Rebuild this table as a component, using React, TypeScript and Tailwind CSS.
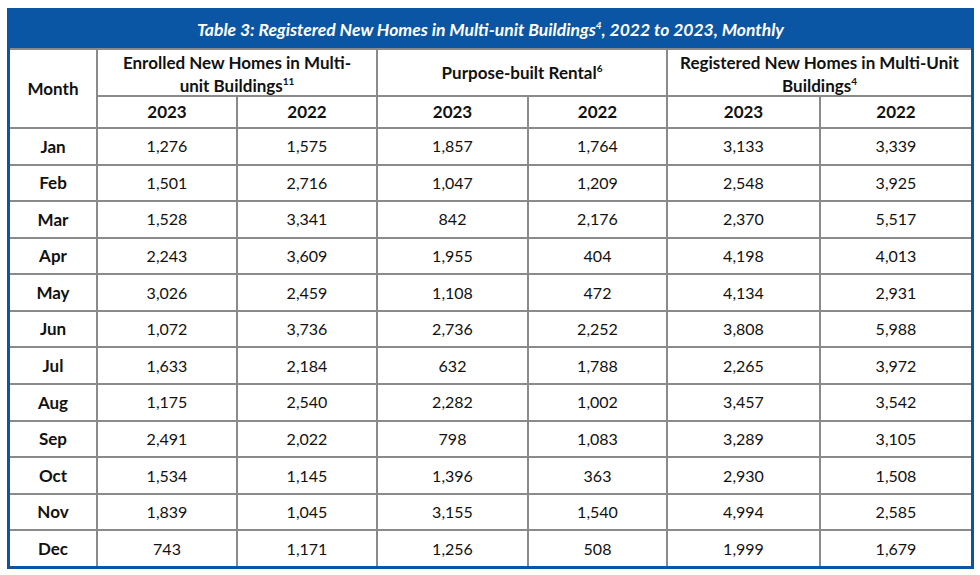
import React from "react";

const rows: [string, string, string, string, string, string, string][] = [
  ["Jan", "1,276", "1,575", "1,857", "1,764", "3,133", "3,339"],
  ["Feb", "1,501", "2,716", "1,047", "1,209", "2,548", "3,925"],
  ["Mar", "1,528", "3,341", "842", "2,176", "2,370", "5,517"],
  ["Apr", "2,243", "3,609", "1,955", "404", "4,198", "4,013"],
  ["May", "3,026", "2,459", "1,108", "472", "4,134", "2,931"],
  ["Jun", "1,072", "3,736", "2,736", "2,252", "3,808", "5,988"],
  ["Jul", "1,633", "2,184", "632", "1,788", "2,265", "3,972"],
  ["Aug", "1,175", "2,540", "2,282", "1,002", "3,457", "3,542"],
  ["Sep", "2,491", "2,022", "798", "1,083", "3,289", "3,105"],
  ["Oct", "1,534", "1,145", "1,396", "363", "2,930", "1,508"],
  ["Nov", "1,839", "1,045", "3,155", "1,540", "4,994", "2,585"],
  ["Dec", "743", "1,171", "1,256", "508", "1,999", "1,679"],
];

const cell = "bg-white flex items-center justify-center text-center";
const sup = "text-[10px] relative -top-[7px] align-baseline leading-none";

export default function App() {
  return (
    <div className="w-[980px] h-[575px] bg-white pt-[8px] pl-[7px]" style={{ fontFamily: "Lato, 'Noto Sans', sans-serif" }}>
      <div className="w-[967px] border-[3px] border-[#0b56a4] bg-white text-[#111111]">
        <div className="h-[39px] bg-[#0b56a4] border-b-2 border-[#8a8a8a] flex items-center justify-center text-white italic font-bold text-[17.5px] pt-[2px]">
          <span>
            Table 3: Registered New Homes in Multi-unit Buildings<sup className={sup}>4</sup>, 2022 to 2023, Monthly
          </span>
        </div>
        <div
          className="grid gap-[2px] bg-[#8a8a8a] h-[516px]"
          style={{ gridTemplateColumns: "86px 138px 138px 149px 137px 151px 1fr", gridTemplateRows: "45px 30px repeat(12, 1fr)" }}
        >
          <div className={`${cell} row-span-2 font-bold text-[17px]`}>Month</div>
          <div className={`${cell} col-span-2 font-bold text-[17px] leading-[23px] px-2 pt-[3px]`}>
            <span>
              Enrolled New Homes in Multi-
              <br />
              unit Buildings<sup className={sup}>11</sup>
            </span>
          </div>
          <div className={`${cell} col-span-2 font-bold text-[17px]`}>
            <span>
              Purpose-built Rental<sup className={sup}>6</sup>
            </span>
          </div>
          <div className={`${cell} col-span-2 font-bold text-[17px] leading-[23px] pt-[3px]`}>
            <span>
              Registered New Homes in Multi-Unit
              <br />
              Buildings<sup className={sup}>4</sup>
            </span>
          </div>
          {["2023", "2022", "2023", "2022", "2023", "2022"].map((y, i) => (
            <div key={i} className={`${cell} font-bold text-[17px]`}>
              {y}
            </div>
          ))}
          {rows.map((r) => (
            <React.Fragment key={r[0]}>
              <div className={`${cell} font-bold text-[17px]`}>{r[0]}</div>
              {r.slice(1).map((v, i) => (
                <div key={i} className={`${cell} text-[16px]`}>
                  {v}
                </div>
              ))}
            </React.Fragment>
          ))}
        </div>
      </div>
    </div>
  );
}
